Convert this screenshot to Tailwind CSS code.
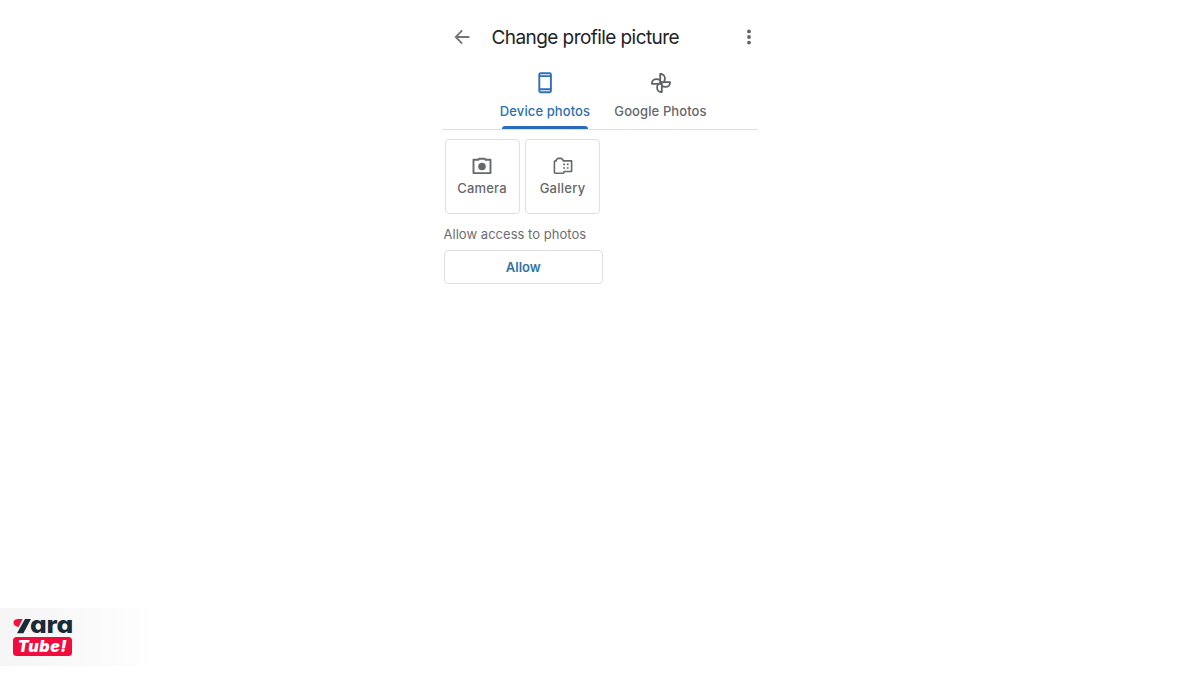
<!DOCTYPE html>
<html lang="en">
<head>
    <meta charset="UTF-8">
    <meta name="viewport" content="width=device-width, initial-scale=1.0">
    <title>Change profile picture</title>
    <script src="https://cdn.jsdelivr.net/npm/@tailwindcss/browser@4"></script>
</head>
<body class="relative h-screen overflow-hidden bg-white font-['Inter','Liberation_Sans',sans-serif]">
    <main class="mx-auto w-[316px]">
        <!-- Header -->
        <header class="flex h-[72px] items-center pt-[2px]">
            <button class="ml-3" aria-label="Back">
                <svg class="block size-4" viewBox="0 0 16 16" fill="none" stroke="#757575" stroke-width="1.8">
                    <path d="M15.4 8H2M8.2 1.4L1.7 8l6.5 6.6"/>
                </svg>
            </button>
            <h1 class="ml-[21.5px] whitespace-nowrap pt-[2px] text-[19px] leading-6 tracking-[-0.57px] text-[#222326]">Change profile picture</h1>
            <button class="ml-auto mr-1.5" aria-label="More">
                <svg class="block h-4 w-1.5" viewBox="0 0 6 16" fill="#626366">
                    <circle cx="3" cy="2.4" r="1.9"/><circle cx="3" cy="8" r="1.9"/><circle cx="3" cy="13.6" r="1.9"/>
                </svg>
            </button>
        </header>

        <!-- Tabs -->
        <nav class="flex h-[58px] border-b border-[#dedfe1]">
            <button class="relative ml-[58px] flex w-[90px] flex-col items-center text-[#2c70af]">
                <svg class="block h-[22px] w-4" viewBox="0 0 16 22" fill="none" stroke="#2d6fba" stroke-width="1.9">
                    <rect x="2.3" y="1.2" width="11.6" height="19" rx="1.2"/>
                    <path d="M2 4.1h12M2 17.3h12"/>
                </svg>
                <span class="mt-2 whitespace-nowrap text-[13px] font-medium leading-[18px] tracking-[0.1px]">Device photos</span>
                <span class="absolute bottom-0 left-0.5 h-[3px] w-[86px] rounded-t-[3px] bg-[#2b6dbd]"></span>
            </button>
            <button class="ml-6 flex w-[93px] flex-col items-center text-[#66686b]">
                <svg class="block size-[22px]" viewBox="0 0 22 22" fill="none" stroke="#5f6164" stroke-width="1.8" stroke-linejoin="round">
                    <path d="M10.2 11V2h.8a3.9 4.5 0 0 1 0 9zM11 10.2h9v.8a4.5 3.9 0 0 1-9 0zM11.8 11v9H11a3.9 4.5 0 0 1 0-9zM11 11.8H2V11a4.5 3.9 0 0 1 9 0z"/>
                </svg>
                <span class="mt-2 whitespace-nowrap text-[13px] font-medium leading-[18px] tracking-[0.1px]">Google Photos</span>
            </button>
        </nav>

        <!-- Photo sources -->
        <div class="mt-[9px] flex gap-[5.5px] pl-[2.5px] text-[13px] font-medium text-[#66686b]">
            <button class="flex h-[75px] w-[75px] flex-col items-center rounded-[4px] border border-[#dfe0e3] pt-[17px]">
                <svg class="block h-[18px] w-5" viewBox="0 0 20 18" fill="none" stroke="#66686b" stroke-width="1.9">
                    <path d="M1.5 2.8h4.9l.9-1.1h5.4l.9 1.1h4.9v13.3h-17z" stroke-linejoin="round"/>
                    <circle cx="10" cy="9.5" r="3.8" fill="#66686b" stroke="none"/>
                </svg>
                <span class="mt-[4px] leading-[18px] tracking-[0.15px]">Camera</span>
            </button>
            <button class="flex h-[75px] w-[75px] flex-col items-center rounded-[4px] border border-[#dfe0e3] pt-[17px]">
                <svg class="block h-[18px] w-5" viewBox="0 0 20 18" fill="none" stroke="#66686b" stroke-width="1.6">
                    <path d="M11 3.9h-.9V3L8.4 1.4H4.8L3.2 3v.9H2.1l-.7.7v10.9l.7.7h8.2l.7-.7v-1h7.6V3.9z" stroke-linejoin="round"/>
                    <path d="M10.2 7.4h1.8M10.2 11h1.8M13.8 7.4h1.8M13.8 11h1.8"/>
                </svg>
                <span class="mt-[4px] leading-[18px] tracking-[0.25px]">Gallery</span>
            </button>
        </div>

        <!-- Permission prompt -->
        <p class="ml-[1.5px] mt-[11px] whitespace-nowrap text-[13px] leading-[18px] tracking-[0.03px] text-[#6d6e71]">Allow access to photos</p>
        <button class="ml-[1.5px] mt-[7px] block h-[34px] w-[159.5px] rounded-[4px] border border-[#dcdee1] pt-px text-[13px] font-semibold text-[#2f72a8]">Allow</button>
    </main>

    <!-- Channel watermark -->
    <div class="absolute left-0 top-[608px] h-[58px] w-[160px] bg-linear-to-r from-[#f5f5f5] via-[#f9f9f9] to-white">
        <div class="relative ml-[13px] h-7 w-[60px]">
            <svg class="absolute left-0 top-[11px]" width="19" height="15" viewBox="0 0 19 15">
                <path d="M5 0h4.7L5.6 8C2 7.8.2 5.4.5 3.1.8 1 2.6 0 5 0z" fill="#f0143f"/>
                <path d="M12 0h6l-7.6 14.2H4z" fill="#1b2a38"/>
            </svg>
            <span class="absolute left-[16.5px] top-[7px] origin-left scale-x-112 text-[23.5px] leading-5 font-extrabold tracking-[-0.3px] text-[#1b2a38] [font-feature-settings:'cv11']">ara</span>
        </div>
        <div class="ml-[13px] mt-[0.5px] flex h-[19.5px] w-[59px] items-center justify-center rounded-[3.5px] bg-[#f00d3d] text-[16px] leading-4 font-black italic tracking-[0.7px] text-white">Tube!</div>
    </div>
</body>
</html>
